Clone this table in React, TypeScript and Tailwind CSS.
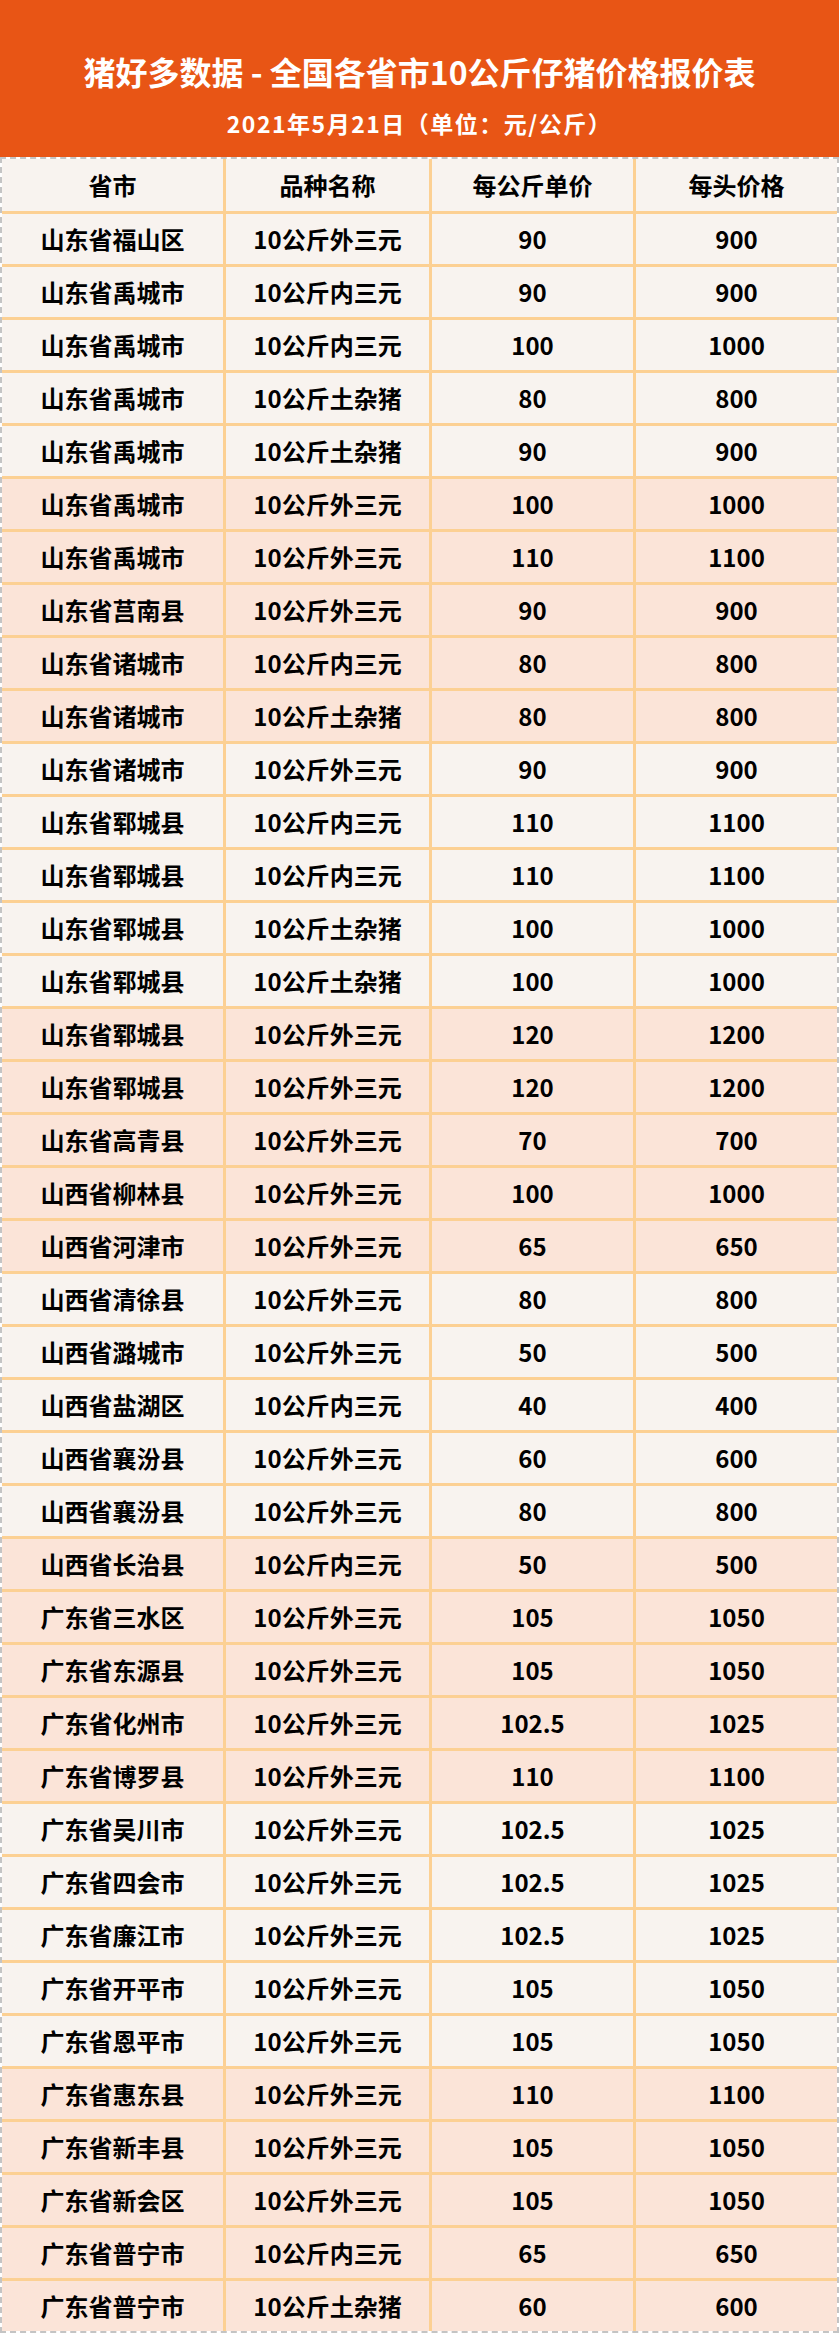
import React from "react";

type Row = [string, string, string, string];

const rows: Row[] = [
  ["山东省福山区", "10公斤外三元", "90", "900"],
  ["山东省禹城市", "10公斤内三元", "90", "900"],
  ["山东省禹城市", "10公斤内三元", "100", "1000"],
  ["山东省禹城市", "10公斤土杂猪", "80", "800"],
  ["山东省禹城市", "10公斤土杂猪", "90", "900"],
  ["山东省禹城市", "10公斤外三元", "100", "1000"],
  ["山东省禹城市", "10公斤外三元", "110", "1100"],
  ["山东省莒南县", "10公斤外三元", "90", "900"],
  ["山东省诸城市", "10公斤内三元", "80", "800"],
  ["山东省诸城市", "10公斤土杂猪", "80", "800"],
  ["山东省诸城市", "10公斤外三元", "90", "900"],
  ["山东省郓城县", "10公斤内三元", "110", "1100"],
  ["山东省郓城县", "10公斤内三元", "110", "1100"],
  ["山东省郓城县", "10公斤土杂猪", "100", "1000"],
  ["山东省郓城县", "10公斤土杂猪", "100", "1000"],
  ["山东省郓城县", "10公斤外三元", "120", "1200"],
  ["山东省郓城县", "10公斤外三元", "120", "1200"],
  ["山东省高青县", "10公斤外三元", "70", "700"],
  ["山西省柳林县", "10公斤外三元", "100", "1000"],
  ["山西省河津市", "10公斤外三元", "65", "650"],
  ["山西省清徐县", "10公斤外三元", "80", "800"],
  ["山西省潞城市", "10公斤外三元", "50", "500"],
  ["山西省盐湖区", "10公斤内三元", "40", "400"],
  ["山西省襄汾县", "10公斤外三元", "60", "600"],
  ["山西省襄汾县", "10公斤外三元", "80", "800"],
  ["山西省长治县", "10公斤内三元", "50", "500"],
  ["广东省三水区", "10公斤外三元", "105", "1050"],
  ["广东省东源县", "10公斤外三元", "105", "1050"],
  ["广东省化州市", "10公斤外三元", "102.5", "1025"],
  ["广东省博罗县", "10公斤外三元", "110", "1100"],
  ["广东省吴川市", "10公斤外三元", "102.5", "1025"],
  ["广东省四会市", "10公斤外三元", "102.5", "1025"],
  ["广东省廉江市", "10公斤外三元", "102.5", "1025"],
  ["广东省开平市", "10公斤外三元", "105", "1050"],
  ["广东省恩平市", "10公斤外三元", "105", "1050"],
  ["广东省惠东县", "10公斤外三元", "110", "1100"],
  ["广东省新丰县", "10公斤外三元", "105", "1050"],
  ["广东省新会区", "10公斤外三元", "105", "1050"],
  ["广东省普宁市", "10公斤内三元", "65", "650"],
  ["广东省普宁市", "10公斤土杂猪", "60", "600"],
];

const font = { fontFamily: '"Noto Sans CJK SC", "Noto Sans", sans-serif' };

function Cells({ cells, first }: { cells: string[]; first?: boolean }) {
  return (
    <>
      {cells.map((c, i) => (
        <div
          key={i}
          className={
            "flex items-center justify-center text-[24px] font-bold text-black leading-none " +
            (i > 0 ? "border-l-[3px] border-[#fcd093] " : "") +
            (first ? "" : "border-t-[3px] border-t-[#fcd093]")
          }
        >
          {c}
        </div>
      ))}
    </>
  );
}

export default function App() {
  return (
    <div className="w-[839px]" style={font}>
      <div className="h-[157px] bg-[#e85515] flex flex-col items-center text-white font-bold">
        <div className="mt-[55px] text-[32px] leading-none">
          猪好多数据 - 全国各省市10公斤仔猪价格报价表
        </div>
        <div className="mt-[25px] text-[23px] leading-none tracking-[1.5px]">
          2021年5月21日（单位：元/公斤）
        </div>
      </div>
      <div className="border-2 border-dashed border-[#c4c4c4]">
        <div className="grid grid-cols-[221px_206px_204px_1fr] h-[52px] bg-[#f8f3ef]">
          <Cells cells={["省市", "品种名称", "每公斤单价", "每头价格"]} first />
        </div>
        {rows.map((r, idx) => {
          const pink = Math.floor(idx / 5) % 2 === 1;
          return (
            <div
              key={idx}
              className={
                "grid grid-cols-[221px_206px_204px_1fr] h-[53px] " +
                (pink ? "bg-[#fbe4d8]" : "bg-[#f8f3ef]")
              }
            >
              <Cells cells={r} />
            </div>
          );
        })}
      </div>
    </div>
  );
}
